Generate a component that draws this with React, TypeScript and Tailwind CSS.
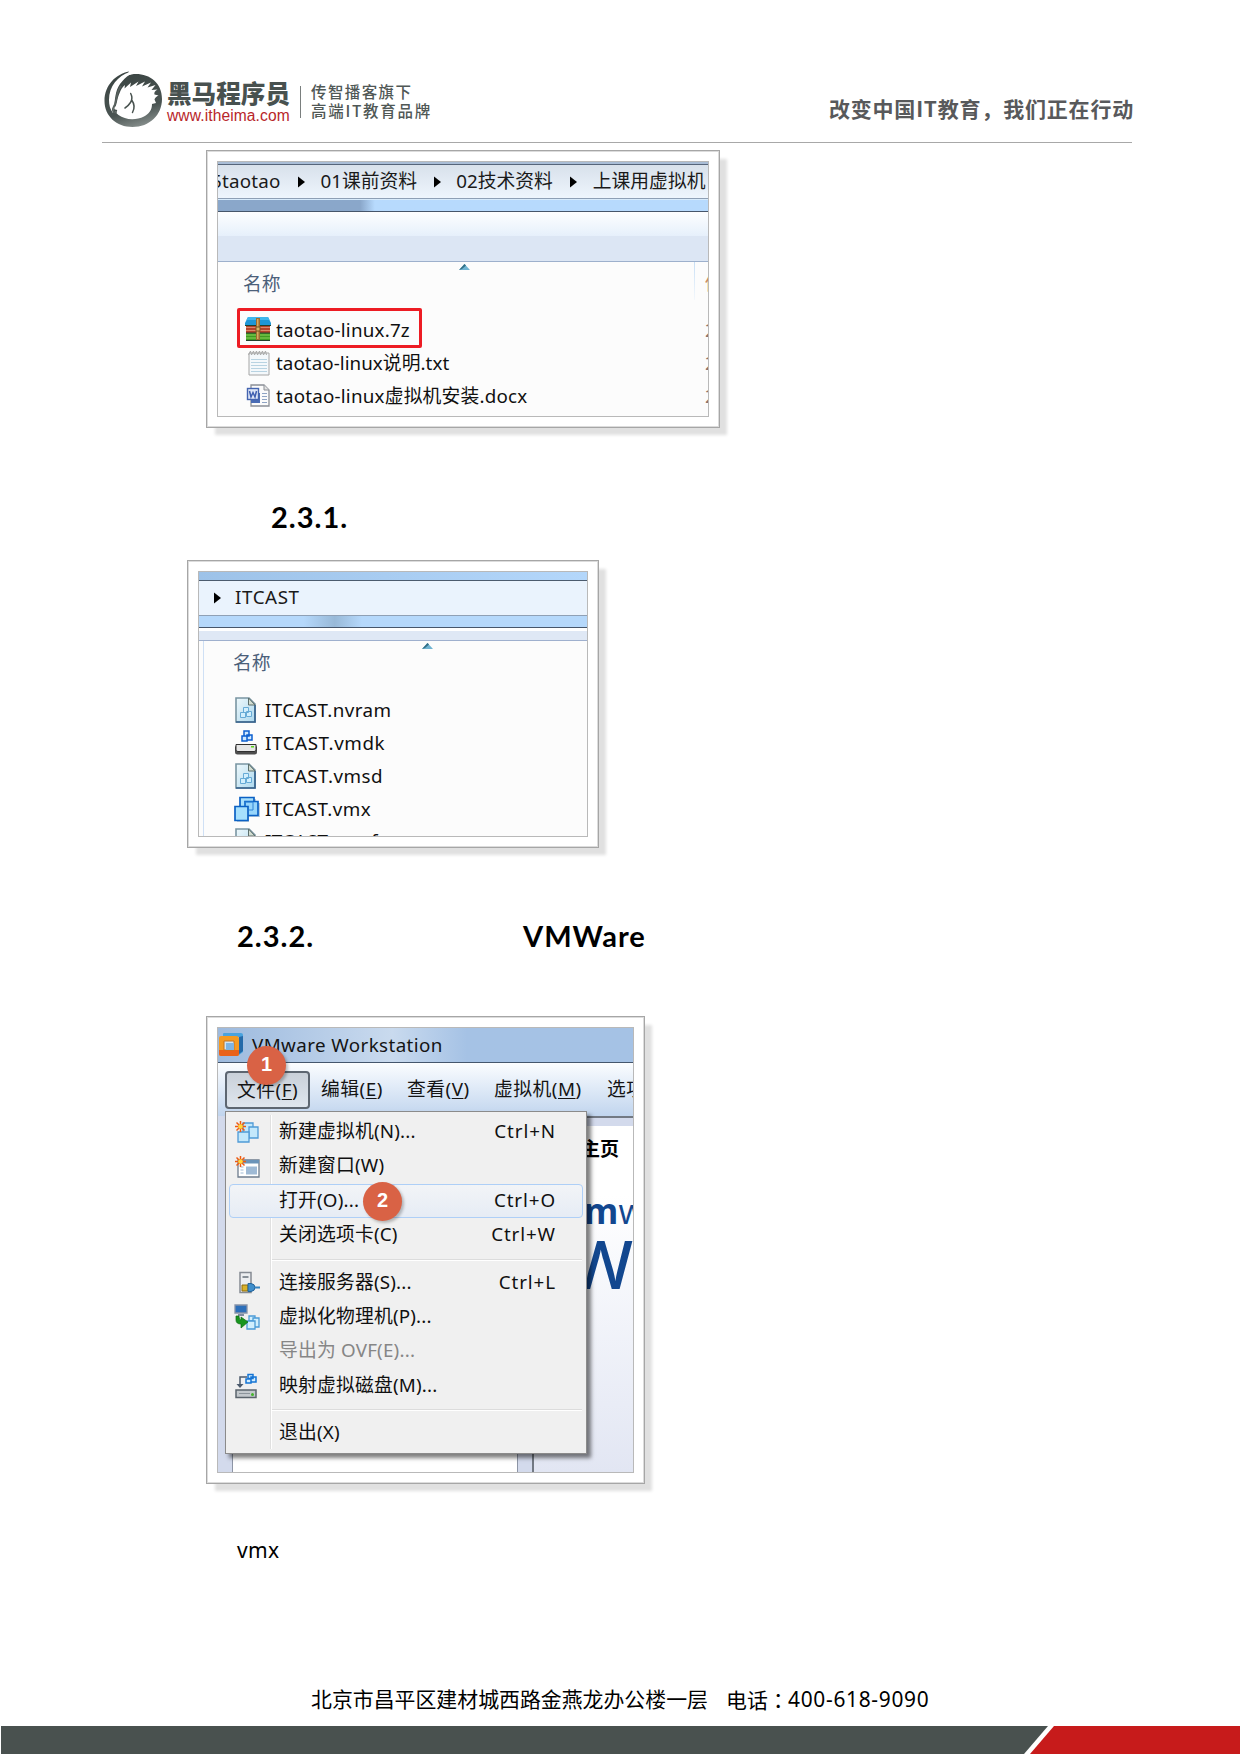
import React from "react";

const UI = "font-['Noto_Sans','Noto_Sans_CJK_SC',sans-serif]";

function Frame({ className, children }: { className: string; children: React.ReactNode }) {
  return (
    <div className={`border border-[#a6a6a6] outline outline-1 -outline-offset-2 outline-[#dcdcdc] bg-white p-[10px] shadow-[8px_8px_3px_-1px_#e0e0e0] ${className}`}>
      <div className="relative h-full w-full overflow-hidden border border-[#b9b9b9]">{children}</div>
    </div>
  );
}

function HorseLogo() {
  return (
    <svg className="h-[58px] w-[60px] shrink-0" viewBox="0 0 60 58">
      <defs>
        <linearGradient id="ring" x1="0.3" y1="0" x2="0.6" y2="1">
          <stop offset="0" stopColor="#3a4442" />
          <stop offset="0.7" stopColor="#4a5452" />
          <stop offset="1" stopColor="#858d8b" />
        </linearGradient>
      </defs>
      <path
        fill="url(#ring)"
        d="M25 1.500C12 4 0.500 15 0.500 31c0 15 12 26 28 26 17 0 29.500-12 29.500-28C58 13 46 4 32 4c-3 0-6 .6-9 2z"
      />
      <path fill="#fff" d="M25.500 2C14 6 5 16 5 30c0 5 1 9 4 13l1-5c1-8 1-17 6-24 3-4 6-7 9-9l6-2.500z" />
      <path
        fill="#fff"
        d="M16 22c1-3 2.500-5 5-7l-.5 3.500 6.500-6-1 4.500 8.500-5.500-2.500 4.500 9-4.500-3 5 9-4-3.500 5 8-2.500-4 5 6-.5c-3 2-3.500 3-3 5l4 1c-2 1-3.500 2-4 4l1.500 3.500-4 1c0 6-3 10-8 12.500-8 4-19 3.500-25.500-1.500-3-2-4.500-5-4-8C13 37 12.500 29 16 22z"
      />
      <path fill="none" stroke="#48524f" strokeWidth="1.500" strokeLinecap="round" d="M26.700 23.500c1.800 3.500 1.500 6.500-.2 9-1.300 2-3 4-5.500 5.500M27.700 30c2.500 3.500 3.300 8 .8 12.500M10 40l2.300.5-.6 2" />
      <path fill="none" stroke="#59625f" strokeWidth="1.700" d="M17 16c-5 7-4 13-6 18-1 3-3 4-2 7 1 1.500 2 2 3.500 1.500" />
    </svg>
  );
}

function Arrow() {
  return (
    <svg className="h-[12px] w-[7px] shrink-0" viewBox="0 0 7 12">
      <path d="M0 0.5 7 6 0 11.5z" fill="#000" />
    </svg>
  );
}

function SortMark({ className }: { className: string }) {
  return (
    <svg className={`h-[6px] w-[11px] ${className}`} viewBox="0 0 11 6">
      <path d="M0 6 5.5 0 11 6z" fill="#6fb4d2" />
      <path d="M0 6 5.5 0 7 1.6 3 5z" fill="#326f86" />
    </svg>
  );
}

function RarIcon() {
  return (
    <svg className="h-[25px] w-[26px]" viewBox="0 0 26 25">
      <path d="M3 0h20l3 6v3H0V6z" fill="#1f97d6" />
      <path d="M3 0h20l1.5 3h-23z" fill="#3fb6ec" />
      <path d="M1 9h24v7H1z" fill="#b5432a" />
      <path d="M1 10.5h24M1 13.5h24" stroke="#dd8667" />
      <path d="M1 16h24v7H1z" fill="#3f9a22" />
      <path d="M1 18h24M1 21h24" stroke="#8ed65b" />
      <path d="M0 8.5h26M1 16h24M1 23.5h24" stroke="#24412c" />
      <path d="M11 1h4v22h-4z" fill="#9c6c2f" />
      <path d="M12 2h1.5v20H12z" fill="#d7ac62" />
      <rect x="11" y="10" width="4" height="4" fill="#d9b567" stroke="#7c541f" />
    </svg>
  );
}

function TxtIcon() {
  return (
    <svg className="h-[26px] w-[26px]" viewBox="0 0 26 26">
      <path d="M4 3h20v22H4z" fill="#f4f8fb" stroke="#a6a6a6" />
      <path d="M6 9.5h16M6 12.5h16M6 15.5h16M6 18.5h16M6 21.5h16" stroke="#b8d3e2" />
      <path d="M3.500 5l2-4 1 4 2-4 1 4 2-4 1 4 2-4 1 4 2-4 1 4 2-4 1 4" fill="none" stroke="#a9a9a9" />
    </svg>
  );
}

function DocIcon() {
  return (
    <svg className="h-[24px] w-[26px]" viewBox="0 0 26 24">
      <path d="M6 1h13l5 5v16H6z" fill="#fbfbfb" stroke="#8b8f96" strokeWidth="1.300" />
      <path d="M19 1v5h5" fill="#e3e3e3" stroke="#8b8f96" />
      <path d="M17 9.500h5M17 12.500h5M17 15.500h5M17 18.500h5" stroke="#8fa4c4" />
      <path d="M6 16v3h9V9h-2" fill="#4a6cb5" />
      <rect x="2.500" y="4.500" width="11" height="11" fill="#dfe7f7" stroke="#4464b0" strokeWidth="1.400" />
      <path d="m4.500 7 1.500 6L8 8.500l2 4.500L11.500 7" fill="none" stroke="#3f5fb0" strokeWidth="1.500" />
    </svg>
  );
}

function VmFileIcon() {
  return (
    <svg className="h-[26px] w-[24px]" viewBox="0 0 24 26">
      <defs>
        <linearGradient id="vmf" x1="0" y1="0" x2="1" y2="1">
          <stop offset="0" stopColor="#eef8fb" />
          <stop offset="1" stopColor="#acd8ee" />
        </linearGradient>
      </defs>
      <path d="M2 1h13l6 6v18H2z" fill="url(#vmf)" stroke="#7995a2" strokeWidth="1.600" />
      <path d="M21 8v17H2" fill="none" stroke="#34628f" strokeWidth="1.600" />
      <path d="M14.500 1v7H21z" fill="#d3ddd2" stroke="#5d6f6c" />
      <g fill="#d2effd" stroke="#67abd6">
        <path d="M9.500 10.500h5v5h-5zM12.500 14.500h5v5h-5zM6.500 15.500h5v5h-5z" />
      </g>
    </svg>
  );
}

function DiskIcon() {
  return (
    <svg className="h-[26px] w-[24px]" viewBox="0 0 24 26">
      <g fill="#cfe9ff" stroke="#0c5fd0" strokeWidth="1.500">
        <path d="M10 1h5v5h-5zM13 5h5v5h-5zM8 6h5v5H8z" />
      </g>
      <path d="M3 14h18l2 3v5q0 2.500-2.500 2.500h-17Q1 24.500 1 22v-5z" fill="#4d4d4d" />
      <path d="M2 14.500h20V20q0 1.500-2 1.500H4Q2 21.500 2 20z" fill="#e6e6e6" stroke="#303030" />
      <path d="M17 16h3v1.500h-3z" fill="#5bd41c" />
    </svg>
  );
}

function VmxIcon() {
  return (
    <svg className="h-[26px] w-[26px]" viewBox="0 0 26 26">
      <path d="M7 2h14v4h4v14H14v5H2V11h5z" fill="#8faec6" transform="translate(1 1)" opacity=".6" />
      <g stroke="#0b61c4" strokeWidth="1.700" fill="#a9e0fc">
        <path d="M6 1.500h14v13H6z" />
        <path d="M11 5.500h13v14H11z" fill="#96d5fb" />
        <path d="M1 10.500h13v14H1z" fill="#a6e0fd" />
      </g>
      <path d="M11 10V6h8v8h-4" fill="none" stroke="#2d84d8" />
    </svg>
  );
}

function Spark() {
  return (
    <g>
      <path d="M6.500 1v11M1 6.500h11M2.500 2.500l8 8M10.500 2.500l-8 8" stroke="#ee5a12" strokeWidth="1.500" />
      <circle cx="6.500" cy="6.500" r="2.300" fill="#ffd83a" />
    </g>
  );
}

function NewVmIcon() {
  return (
    <svg className="h-[24px] w-[26px]" viewBox="0 0 26 24">
      <g fill="#c3e8fb" stroke="#4f9ad6" strokeWidth="1.300">
        <path d="M9 3h10v10H9z" />
        <path d="M15 7h9v11h-9z" />
        <path d="M4 12h11v10H4z" />
      </g>
      <Spark />
    </svg>
  );
}

function NewWindowIcon() {
  return (
    <svg className="h-[24px] w-[26px]" viewBox="0 0 26 24">
      <path d="M4 5h21v17H4z" fill="#fff" stroke="#6d7c8d" strokeWidth="1.300" />
      <path d="M4 5h21v3.500H4z" fill="#6b94b9" />
      <path d="M12 11.500h11v8H12z" fill="#9fbad5" />
      <path d="M6.500 12h3M6.500 15h3M6.500 18h3" stroke="#9fbad5" />
      <Spark />
    </svg>
  );
}

function ServerIcon() {
  return (
    <svg className="h-[24px] w-[26px]" viewBox="0 0 26 24">
      <path d="M6 1.500h11v20H6z" fill="#eceef0" stroke="#858b93" strokeWidth="1.500" />
      <path d="M8.500 6h6" stroke="#5c6670" strokeWidth="1.400" />
      <path d="M8 14h6v6H8z" fill="#d8b12a" stroke="#8e6d0d" />
      <path d="M14 12.500h3q4 .5 4 4t-4 4h-3z" fill="#3f8ecb" stroke="#23649c" />
      <path d="M21 16.500h5" stroke="#3583c0" strokeWidth="2" />
    </svg>
  );
}

function ConvertIcon() {
  return (
    <svg className="h-[26px] w-[26px]" viewBox="0 0 26 26">
      <path d="M1 1h12v8H1z" fill="#2c6fba" stroke="#8793a8" strokeWidth="1.300" />
      <path d="M4 11h6" stroke="#5b6b88" strokeWidth="1.500" />
      <g fill="#d1effd" stroke="#4b9bd6" strokeWidth="1.300">
        <path d="M15 12h6v5h-6z" />
        <path d="M19 14h6v9h-6z" />
        <path d="M13 17h8v8h-8z" />
      </g>
      <path d="M2 12v4q0 4 5 4v4l7-6-7-5v3q-2 0-2-4z" fill="#18951e" stroke="#0c6c12" strokeWidth=".7" />
    </svg>
  );
}

function MapDiskIcon() {
  return (
    <svg className="h-[26px] w-[24px]" viewBox="0 0 24 26">
      <path d="M13 4H6v9" fill="none" stroke="#4b5a6c" strokeWidth="1.500" />
      <path d="M2.500 11h7L6 15z" fill="#4b5a6c" />
      <g fill="#d5efff" stroke="#1574d4" strokeWidth="1.500">
        <path d="M14 1.500h5v4h-5zM17 4h5v5h-5zM12 6h5v4h-5z" />
      </g>
      <path d="M2 17h20v7.500H2z" fill="#c3c8cc" stroke="#5b646c" strokeWidth="1.500" />
      <path d="M5 20.500h11" stroke="#8c949b" />
      <circle cx="18.500" cy="21.500" r="1.500" fill="#44b52a" />
    </svg>
  );
}

function WorkstationIcon() {
  return (
    <svg className="h-[26px] w-[25px] shrink-0" viewBox="0 0 25 26">
      <path d="M5 1h17q2 0 2 2v17l-4 3V5H4V2q0-1 1-1z" fill="#4aa3de" />
      <path d="M20 5v17l4-3V4z" fill="#246aa9" />
      <path d="M2 4h15q3 0 3 3v15q0 2-2 2H2q-2 0-2-2V6q0-2 2-2z" fill="#f59a22" />
      <path d="M0 18h20v4q0 2-2 2H2q-2 0-2-2z" fill="#e9621a" />
      <path d="M5 9h10v9H5z" fill="#cfe4f5" stroke="#c8741c" />
      <path d="M7 11h8v7H7z" fill="#7fb4e2" />
    </svg>
  );
}

function FileRow({ icon, children, className = "" }: { icon: React.ReactNode; children: React.ReactNode; className?: string }) {
  return (
    <div className={`flex h-[33px] items-center text-[18.800px] text-[#101010] ${className}`}>
      <span className="flex w-[31px] shrink-0">{icon}</span>
      <span className="pt-[1px] whitespace-nowrap">{children}</span>
    </div>
  );
}

function MenuItem({ icon, label, keys, dim, active }: { icon?: React.ReactNode; label: string; keys?: string; dim?: boolean; active?: boolean }) {
  return (
    <div
      className={`relative mx-[3px] flex h-[34.400px] items-center rounded-[4px] border text-[18.800px] tracking-[0.2px] ${
        active ? "border-[#aecff7] bg-linear-to-b from-[#f2f4f7] to-[#e6ecf5]" : "border-transparent"
      } ${dim ? "text-[#868686]" : "text-[#101010]"}`}
    >
      <span className="flex w-[49px] shrink-0 pl-[4px]">{icon}</span>
      <span className="grow pb-[2px] whitespace-nowrap">{label}</span>
      <span className="pr-[26px] pb-[2px] tracking-[0.9px]">{keys}</span>
    </div>
  );
}

function Separator() {
  return <div className="ml-[46px] mr-[4px] mt-[6px] mb-[5px] h-[2px] border-t border-[#dcdcdc] bg-white" />;
}

function Badge({ n, className }: { n: string; className: string }) {
  return (
    <div className={`absolute flex h-[39px] w-[39px] items-center justify-center rounded-full bg-[#d96245] pb-[3px] font-['Liberation_Sans',sans-serif] text-[20px] font-bold text-white shadow-[2px_2px_3px_#00000040] ${className}`}>
      {n}
    </div>
  );
}

function MenuBarItem({ label, hot, className }: { label: string; hot: string; className: string }) {
  return (
    <span className={`shrink-0 tracking-[0.5px] whitespace-nowrap ${className}`}>
      {label}
      {hot && (
        <>
          (<span className="underline decoration-1 underline-offset-2">{hot}</span>)
        </>
      )}
    </span>
  );
}

export default function App() {
  return (
    <div className={`flex h-[1754px] w-[1240px] flex-col overflow-hidden bg-white ${UI}`}>
      <header className="mr-[108px] ml-[102px] flex h-[143px] shrink-0 items-start justify-between border-b border-[#a8a8a8] pt-[70px]">
        <div className="flex">
          <div className="pl-[2px]">
            <HorseLogo />
          </div>
          <div className="ml-[3px] flex w-[124px] flex-col pt-[10px]">
            <span className="text-[24.600px] leading-[28px] font-black whitespace-nowrap text-[#48514f]">黑马程序员</span>
            <span className="font-['Liberation_Sans',sans-serif] text-[15.600px] leading-[16px] tracking-[0.1px] text-[#b8262a]">www.itheima.com</span>
          </div>
          <div className="mt-[16px] ml-[9px] h-[32px] w-px bg-[#7a7f7e]" />
          <div className="ml-[10px] flex flex-col pt-[12px] font-['Noto_Sans_CJK_SC',sans-serif] text-[15.500px] leading-[18.500px] font-medium whitespace-nowrap text-[#505856]">
            <span className="tracking-[1.4px]">传智播客旗下</span>
            <span className="tracking-[1.700px]">高端IT教育品牌</span>
          </div>
        </div>
        <div className="mt-[23px] -mr-[2px] font-['Noto_Sans_CJK_SC',sans-serif] text-[21px] leading-[30px] font-bold tracking-[0.800px] whitespace-nowrap text-[#58595b]">
          改变中国IT教育，我们正在行动
        </div>
      </header>

      <main className="flex grow flex-col items-start">
        <Frame className="mt-[7px] ml-[206px] h-[278px] w-[514px]">
          <div className="h-[3px] border-b border-[#56657a] bg-[#a9bdd6]" />
          <div className="flex h-[34px] items-center overflow-hidden border-b border-[#8e9fb5] bg-linear-to-b from-[#d8e1eb] to-[#eef5fd] pb-[1px] text-[18.800px] whitespace-nowrap text-[#1a1a1a]">
            <span className="-ml-[7px] tracking-[0.2px]">5taotao</span>
            <span className="ml-[17px] flex pt-[2px]"><Arrow /></span>
            <span className="ml-[16px]">01课前资料</span>
            <span className="ml-[17px] flex pt-[2px]"><Arrow /></span>
            <span className="ml-[15px]">02技术资料</span>
            <span className="ml-[17px] flex pt-[2px]"><Arrow /></span>
            <span className="ml-[16px]">上课用虚拟机</span>
          </div>
          <div className="h-[13px] border-t border-b border-t-[#d8ebfc] border-b-[#46566b] bg-linear-to-r from-[#8aa7ca] from-[29%] to-[#b7dafd] to-[32%]" />
          <div className="h-[24px] bg-linear-to-b from-[#fdfeff] to-[#e6f0fb]" />
          <div className="h-[26px] border-b border-[#9db0cc] bg-[#dce6f4]" />
          <div className="relative flex h-[154px] flex-col bg-[#fcfcfc]">
            <SortMark className="absolute top-[2px] left-[241px]" />
            <div className="absolute top-0 left-[476px] h-[38px] w-px bg-linear-to-b from-[#c8dff5] to-[#f4f8fc]" />
            <div className="absolute top-[5px] left-[487px] w-[20px] text-[18.800px] leading-[33px] text-[#c98c66]">
              <div>修</div>
              <div className="mt-[14px] text-[#8d736c]">2</div>
              <div className="text-[#8d736c]">2</div>
              <div className="text-[#8d736c]">2</div>
            </div>
            <div className="flex h-[51px] shrink-0 items-start pt-[9px] pl-[25px] text-[18.800px] leading-[26px] text-[#4c607a]">名称</div>
            <FileRow className="pl-[27px] tracking-[0.200px]" icon={<RarIcon />}>taotao-linux.7z</FileRow>
            <FileRow className="pl-[27px] tracking-[0.050px]" icon={<TxtIcon />}>taotao-linux说明.txt</FileRow>
            <FileRow className="pl-[27px] tracking-[0.200px]" icon={<DocIcon />}>taotao-linux虚拟机安装.docx</FileRow>
            <div className="absolute top-[46px] left-[19px] h-[40px] w-[185px] rounded-[2px] border-3 border-[#ed1c24]" />
          </div>
        </Frame>

        <h2 className="mt-[69px] ml-[271px] h-[41px] font-['Lato',sans-serif] text-[29px] leading-[40px] font-bold tracking-[1px] text-black">2.3.1.</h2>

        <Frame className="mt-[22px] ml-[187px] h-[288px] w-[412px]">
          <div className="h-[9px] border-b border-[#4b5b6e] bg-linear-to-r from-[#9dc2e8] to-[#b4d7fb]" />
          <div className="flex h-[35px] items-center border-b border-[#8fa0b5] bg-[#eaf3fd] pl-[15px] text-[18.800px] text-[#1a1a1a]">
            <Arrow />
            <span className="ml-[14px] pb-[2px] tracking-[0.600px]">ITCAST</span>
          </div>
          <div className="h-[12px] border-b border-[#46566b] bg-linear-to-r from-[#b5d8fb] from-[27%] via-[#98b9d8] via-[35%] to-[#b5d8fb] to-[42%]" />
          <div className="h-[13px] border-t-3 border-b border-t-white border-b-[#9fb0ce] bg-[#dfe8f5]" />
          <div className="relative flex h-[200px] flex-col bg-[#fcfcfc] pl-[35px]">
            <div className="absolute top-0 left-[4px] h-full w-px bg-[#cfe0f5]" />
            <SortMark className="absolute top-[2px] left-[223px]" />
            <div className="-ml-[1px] h-[52px] shrink-0 pt-[9px] text-[18.800px] leading-[26px] text-[#4c607a]">名称</div>
            <FileRow className="shrink-0 tracking-[0.400px]" icon={<VmFileIcon />}>ITCAST.nvram</FileRow>
            <FileRow className="shrink-0 tracking-[0.600px]" icon={<DiskIcon />}>ITCAST.vmdk</FileRow>
            <FileRow className="shrink-0 tracking-[0.500px]" icon={<VmFileIcon />}>ITCAST.vmsd</FileRow>
            <FileRow className="shrink-0 tracking-[0.400px]" icon={<VmxIcon />}>ITCAST.vmx</FileRow>
            <FileRow className="-mt-[1px] shrink-0 tracking-[0.400px]" icon={<VmFileIcon />}>ITCAST.vmxf</FileRow>
          </div>
        </Frame>

        <h2 className="mt-[68px] ml-[237px] flex h-[41px] font-['Lato',sans-serif] text-[29px] leading-[40px] font-bold tracking-[1px] text-black">
          <span className="w-[286px]">2.3.2.</span>
          <span>VMWare</span>
        </h2>

        <Frame className="mt-[59px] ml-[206px] h-[468px] w-[439px]">
          <div className="flex h-[35px] items-center border-b border-[#44566d] bg-linear-to-r from-[#9dbade] via-[#c9daee] via-[42%] to-[#a5c2e5] to-[60%] pl-[1px] text-[18.800px] text-[#141414]">
            <WorkstationIcon />
            <span className="ml-[8px] tracking-[0.400px] whitespace-nowrap">VMware Workstation</span>
          </div>
          <div className="flex h-[53px] items-start bg-linear-to-b from-[#fbfdff] to-[#c1d5ee] pt-[8px] pl-[7px] text-[18.800px] text-[#141414]">
            <div className="flex h-[38px] w-[85px] shrink-0 items-center justify-center rounded-[4px] border-2 border-[#5d6671] bg-linear-to-b from-[#c9d0d9] to-[#dfe6ee]">
              <MenuBarItem label="文件" hot="F" className="" />
            </div>
            <div className="flex h-[36px] items-center">
              <MenuBarItem label="编辑" hot="E" className="ml-[11px] w-[86px]" />
              <MenuBarItem label="查看" hot="V" className="w-[87px]" />
              <MenuBarItem label="虚拟机" hot="M" className="w-[113px]" />
              <MenuBarItem label="选项卡" hot="" className="" />
            </div>
          </div>
          <div className="flex h-[356px] bg-[#d3daec]">
            <div className="ml-[14px] w-[286px] border-x border-[#8d95a5] bg-white" />
            <div className="ml-[14px] flex grow flex-col border-t-2 border-l-2 border-[#727983]">
              <div className="h-[8px] bg-[#d3daec]" />
              <div className="relative grow overflow-hidden bg-linear-to-b from-white from-[20%] to-[#e2e6f3]">
                <div className="absolute top-[9px] left-[47px] text-[19px] leading-[28px] font-bold whitespace-nowrap text-black">主页</div>
                <div className="absolute top-[67px] left-[50px] font-['Open_Sans',sans-serif] text-[35px] leading-[36px] whitespace-nowrap text-[#12478f]">
                  <span className="font-bold">m</span>ware
                </div>
                <div className="absolute top-[103px] left-[35px] font-['Noto_Sans',sans-serif] text-[68px] leading-[68px] font-medium tracking-[0.500px] whitespace-nowrap text-[#12478f]">Wo</div>
              </div>
            </div>
          </div>

          <div className="absolute top-[83px] left-[7px] h-[343px] w-[362px] border border-[#8b8b8b] bg-[#f0f0f0] pt-[3px] shadow-[4px_4px_4px_#00000080]">
            <div className="absolute top-[3px] left-[44px] h-[334px] w-[2px] border-l border-[#e0e0e0] bg-white" />
            <MenuItem icon={<NewVmIcon />} label="新建虚拟机(N)..." keys="Ctrl+N" />
            <MenuItem icon={<NewWindowIcon />} label="新建窗口(W)" />
            <MenuItem label="打开(O)..." keys="Ctrl+O" active />
            <MenuItem label="关闭选项卡(C)" keys="Ctrl+W" />
            <Separator />
            <MenuItem icon={<ServerIcon />} label="连接服务器(S)..." keys="Ctrl+L" />
            <MenuItem icon={<ConvertIcon />} label="虚拟化物理机(P)..." />
            <MenuItem label="导出为 OVF(E)..." dim />
            <MenuItem icon={<MapDiskIcon />} label="映射虚拟磁盘(M)..." />
            <Separator />
            <MenuItem label="退出(X)" />
          </div>
          <Badge n="1" className="top-[18px] left-[29px]" />
          <Badge n="2" className="top-[154px] left-[145px]" />
        </Frame>

        <p className="mt-[51px] ml-[237px] text-[21px] leading-[30px] tracking-[0.300px] text-black">vmx</p>
      </main>

      <footer className="shrink-0">
        <div className="flex h-[42px] items-start pl-[311px] text-[20.900px] leading-[30px] whitespace-nowrap text-black">
          <span className="w-[415px]">北京市昌平区建材城西路金燕龙办公楼一层</span>
          <span className="w-[62px] font-['Noto_Sans_CJK_SC',sans-serif]">
            电话<span className="font-['Noto_Sans_CJK_TC',sans-serif]" lang="zh-TW">：</span>
          </span>
          <span className="tracking-[0.700px]">400-618-9090</span>
        </div>
        <div className="ml-px flex h-[28px]">
          <div className="w-[1047px] bg-[#49514f] [clip-path:polygon(0_0,100%_0,calc(100%_-_24px)_100%,0_100%)]" />
          <div className="-ml-[18px] grow bg-[#c71b1b] [clip-path:polygon(24px_0,100%_0,100%_100%,0_100%)]" />
        </div>
      </footer>
    </div>
  );
}
